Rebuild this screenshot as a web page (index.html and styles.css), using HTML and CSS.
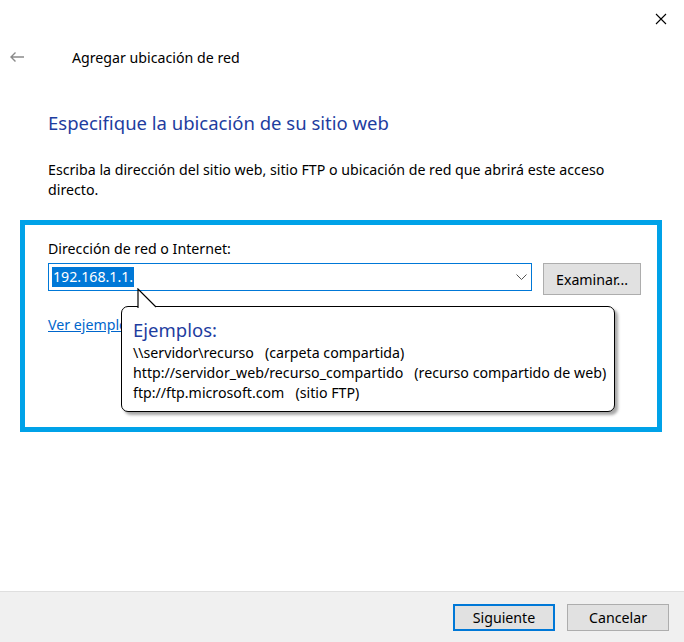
FILE: index.html
```html
<!DOCTYPE html>
<html lang="es">
<head>
  <meta charset="UTF-8" />
  <title>Agregar ubicación de red</title>
  <link rel="stylesheet" href="styles.css">
</head>
<body>

<div class="window">
  <div class="titlebar">
    <button class="close" aria-label="Cerrar">
      <svg width="12" height="12" viewBox="0 0 12 12"><path d="M1 1L11 11M11 1L1 11" stroke="#000" stroke-width="1.1" fill="none"/></svg>
    </button>
  </div>

  <div class="nav">
    <span class="back">
      <svg width="16" height="12" viewBox="0 0 16 12"><path d="M15 6H2M6.5 1.5L2 6l4.5 4.5" stroke="#8a8a8a" stroke-width="1.4" fill="none"/></svg>
    </span>
    <span class="nav-title">Agregar ubicación de red</span>
  </div>

  <div class="content">
    <h1 class="heading">Especifique la ubicación de su sitio web</h1>
    <p class="intro">Escriba la dirección del sitio web, sitio FTP o ubicación de red que abrirá este acceso directo.</p>

    <div class="highlight">
      <label class="field-label">Dirección de red o Internet:</label>
      <div class="field-row">
        <div class="combo">
          <span class="selected">192.168.1.1.</span>
          <svg class="chevron" width="11" height="7" viewBox="0 0 11 7"><path d="M0.5 0.5L5.5 5.5L10.5 0.5" stroke="#555" stroke-width="1" fill="none"/></svg>

          <div class="balloon">
            <svg class="tail" width="22" height="20" viewBox="0 0 22 20"><path d="M1 20V1L19 19" stroke="#000" stroke-width="1.2" fill="#fff"/></svg>
            <div class="balloon-title">Ejemplos:</div>
            <div class="balloon-line">\\servidor\recurso&nbsp;&nbsp;&nbsp;(carpeta compartida)</div>
            <div class="balloon-line">http://servidor_web/recurso_compartido&nbsp;&nbsp;&nbsp;(recurso compartido de web)</div>
            <div class="balloon-line">ftp://ftp.microsoft.com&nbsp;&nbsp;&nbsp;(sitio FTP)</div>
          </div>
        </div>
        <button class="btn">Examinar...</button>
      </div>
      <a class="link" href="#">Ver ejemplos</a>
    </div>
  </div>

  <div class="footer">
    <button class="btn btn-default">Siguiente</button>
    <button class="btn">Cancelar</button>
  </div>
</div>

</body>
</html>
```

FILE: styles.css
```css
* { box-sizing: border-box; }
body {
  margin: 0;
  background: #fff;
  font-family: "Noto Sans", "Open Sans", sans-serif;
  font-size: 14.2px;
  color: #000;
}
.window {
  width: 684px;
  height: 642px;
  display: flex;
  flex-direction: column;
  overflow: hidden;
}
.titlebar {
  height: 38px;
  display: flex;
  justify-content: flex-end;
}
.close {
  width: 46px;
  height: 38px;
  border: none;
  background: none;
  padding: 0;
  display: flex;
  align-items: center;
  justify-content: center;
}
.nav {
  display: flex;
  align-items: center;
  height: 38px;
}
.back { width: 72px; padding-left: 9px; display: flex; }
.nav-title { font-size: 14.2px; }
.content {
  flex: 1;
  padding: 0 20px 0 20px;
}
.heading {
  margin: 34px 0 0 28px;
  font-size: 18.5px;
  font-weight: normal;
  color: #1e3d9f;
}
.intro {
  margin: 25px 50px 0 28px;
  font-size: 14.2px;
  line-height: 20px;
}
.highlight {
  margin-top: 20px;
  width: 642px;
  height: 212px;
  border: 5px solid #00a2e8;
  padding: 15px 15px 0 23px;
}
.field-label { display: block; font-size: 14.2px; line-height: 18px; }
.field-row {
  display: flex;
  gap: 11px;
  margin-top: 5px;
  align-items: flex-start;
}
.combo {
  position: relative;
  width: 484px;
  height: 28px;
  border: 1px solid #0078d7;
  padding: 3px 3px;
}
.selected {
  background: #0078d7;
  color: #fff;
  font-size: 14.2px;
  line-height: 20px;
  display: inline-block;
  padding: 0 1px;
}
.chevron { position: absolute; right: 4px; top: 10px; }
.btn {
  font-family: inherit;
  font-size: 14.2px;
  color: #000;
  background: #e1e1e1;
  border: 1px solid #adadad;
  height: 32px;
  width: 98px;
  padding: 0;
}
.link {
  display: inline-block;
  margin-top: 20px;
  color: #0066cc;
  font-size: 14.2px;
}
.balloon {
  position: absolute;
  left: 72px;
  top: 42px;
  width: 494px;
  height: 106px;
  background: #fff;
  border: 1.2px solid #000;
  border-radius: 7px;
  box-shadow: 3px 3px 3px rgba(0,0,0,0.35);
  padding: 10px 11px 0;
  z-index: 2;
}
.tail { position: absolute; left: 15px; top: -19px; }
.balloon-title {
  color: #1e3d9f;
  font-size: 18.5px;
  line-height: 26px;
}
.balloon-line { font-size: 14.2px; line-height: 20px; white-space: nowrap; }
.footer {
  height: 51px;
  background: #f0f0f0;
  border-top: 1px solid #dfdfdf;
  display: flex;
  justify-content: flex-end;
  align-items: center;
  gap: 12px;
  padding-right: 15px;
}
.footer .btn { width: 102px; height: 27px; }
.btn-default { border: 2px solid #0078d7; }
```
